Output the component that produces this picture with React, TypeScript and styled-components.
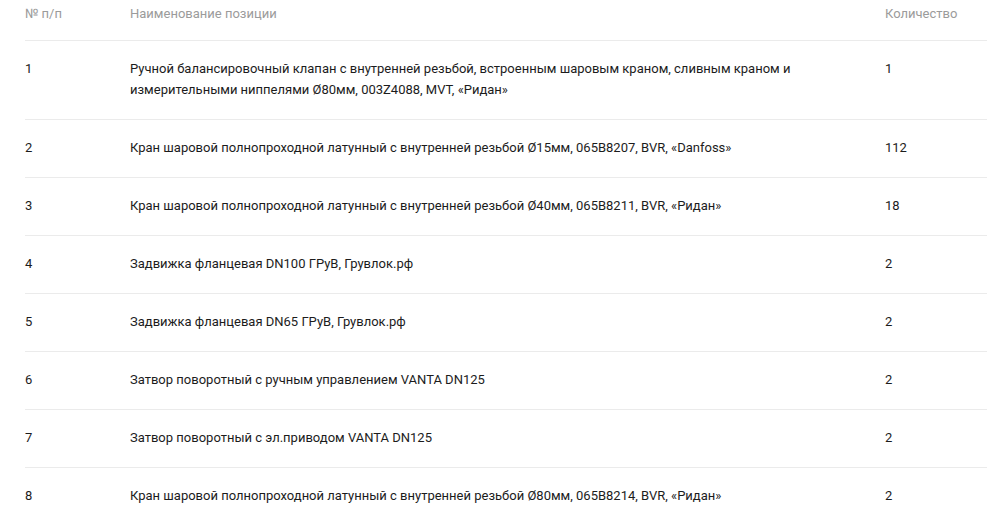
import { createGlobalStyle, styled } from "styled-components";

const GlobalStyle = createGlobalStyle`
  html, body {
    margin: 0;
    padding: 0;
    background: #ffffff;
    overflow: hidden;
  }
  body {
    font-family: Roboto, "Liberation Sans", Arial, sans-serif;
    font-size: 13px;
    color: #1c1c1c;
  }
`;

const Wrapper = styled.div`
  padding-left: 25px;
`;

const Table = styled.div`
  display: grid;
  grid-template-columns: 105px 755px 1fr;
`;

const Row = styled.div<{ head?: boolean }>`
  display: contents;
  & > div {
    padding: ${(p) => (p.head ? "3px 0 16px" : "17px 0 19px")};
    border-top: ${(p) => (p.head ? "none" : "1px solid #ebebeb")};
    color: ${(p) => (p.head ? "#9b9b9b" : "#1c1c1c")};
  }
`;

const Cell = styled.div`
  line-height: 21px;
  text-align: left;
`;

interface Item {
  n: number;
  name: string;
  qty: number;
}

const items: Item[] = [
  {
    n: 1,
    name: "Ручной балансировочный клапан с внутренней резьбой, встроенным шаровым краном, сливным краном и измерительными ниппелями Ø80мм, 003Z4088, MVT, «Ридан»",
    qty: 1,
  },
  { n: 2, name: "Кран шаровой полнопроходной латунный с внутренней резьбой Ø15мм, 065B8207, BVR, «Danfoss»", qty: 112 },
  { n: 3, name: "Кран шаровой полнопроходной латунный с внутренней резьбой Ø40мм, 065B8211, BVR, «Ридан»", qty: 18 },
  { n: 4, name: "Задвижка фланцевая DN100 ГРуВ, Грувлок.рф", qty: 2 },
  { n: 5, name: "Задвижка фланцевая DN65 ГРуВ, Грувлок.рф", qty: 2 },
  { n: 6, name: "Затвор поворотный с ручным управлением VANTA DN125", qty: 2 },
  { n: 7, name: "Затвор поворотный с эл.приводом VANTA DN125", qty: 2 },
  { n: 8, name: "Кран шаровой полнопроходной латунный с внутренней резьбой Ø80мм, 065B8214, BVR, «Ридан»", qty: 2 },
];

const NameText = styled.span`
  display: block;
  max-width: 670px;
`;

export default function App() {
  return (
    <>
      <GlobalStyle />
      <Wrapper>
        <Table>
          <Row head>
            <Cell>№ п/п</Cell>
            <Cell>Наименование позиции</Cell>
            <Cell>Количество</Cell>
          </Row>
          {items.map((it) => (
            <Row key={it.n}>
              <Cell>{it.n}</Cell>
              <Cell>
                <NameText>{it.name}</NameText>
              </Cell>
              <Cell>{it.qty}</Cell>
            </Row>
          ))}
        </Table>
      </Wrapper>
    </>
  );
}
